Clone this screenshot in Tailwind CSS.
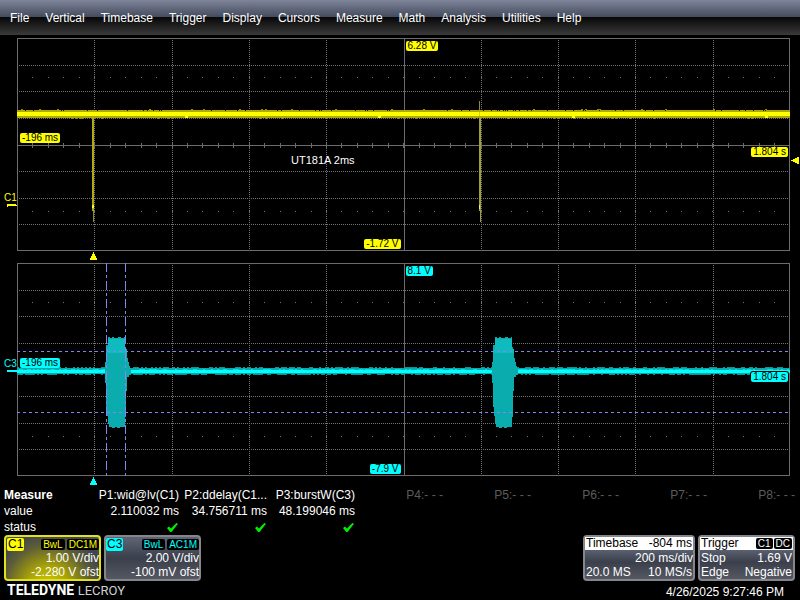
<!DOCTYPE html>
<html lang="en">
<head>
  <meta charset="UTF-8">
  <meta name="viewport" content="width=device-width, initial-scale=1.0">
  <title>Teledyne LeCroy</title>
  <script src="https://cdn.jsdelivr.net/npm/@tailwindcss/browser@4"></script>
</head>
<body class="min-h-screen bg-black text-white text-xs font-['Liberation_Sans',Arial,sans-serif] flex flex-col">

  <!-- Menu bar -->
  <nav class="h-[35px] flex items-center gap-4 pl-[10px] bg-linear-to-b from-[#7f859a] via-[#444c5e] via-48% to-[#3a3a3a] relative">
    <div class="absolute inset-x-0 bottom-0 h-[18px] bg-linear-to-b from-[#080808] to-[#3b3b3b]"></div>
    <button class="relative">File</button>
    <button class="relative">Vertical</button>
    <button class="relative">Timebase</button>
    <button class="relative">Trigger</button>
    <button class="relative">Display</button>
    <button class="relative">Cursors</button>
    <button class="relative">Measure</button>
    <button class="relative">Math</button>
    <button class="relative">Analysis</button>
    <button class="relative">Utilities</button>
    <button class="relative">Help</button>
  </nav>

  <!-- Waveform grids -->
  <main class="flex flex-col gap-3 pt-[3px] pl-[17px] pr-[10px] pb-[11px]">

    <!-- C1 -->
    <section class="relative h-[213px] text-[10px] leading-[10px] text-black">
      <svg class="w-full h-full block" viewBox="0 0 773 213" preserveAspectRatio="none" shape-rendering="crispEdges">
        <g class="grid-lines" data-axis="1"></g>
        <path d="M0 72h773v8H0z" fill="#b0aa00"/>
        <path class="noise" data-top="72" data-bottom="80" data-density="0.05" data-seed="7" fill="#8f8a10"/>
        <path class="gaps" data-y="72" data-seed="21" fill="#1a1a00"/>
        <path d="M75 79h2v94h-2z" fill="#b0aa14"/>
        <path d="M76 173h1v11h-1z" fill="#8f8b2c"/>
        <path d="M75 167h2v3h-2z" fill="#ffff00"/>
        <path d="M462 63h1v9h-1z" fill="#8f8b2c"/>
        <path d="M462 79h2v94h-2z" fill="#a39f35"/>
        <path d="M463 173h1v11h-1z" fill="#a39f35"/>
        <path d="M462 167h1v4h-1z" fill="#f4f060"/>
        <path d="M0 74h773v4H0z" fill="#ffff00"/>
        <path d="M168 78h3v2h-3zM361 78h3v2h-3zM555 78h3v2h-3zM748 78h3v2h-3z" fill="#ffff00"/>
        <path d="M462 74h1v4h-1z" fill="#d8d400"/>
      </svg>
      <span class="absolute top-[3px] left-1/2 ml-[2px] px-[2px] rounded-xs bg-[#ffff00]">6.28 V</span>
      <span class="absolute bottom-[2px] right-1/2 mr-[3px] px-[2px] rounded-xs bg-[#ffff00]">-1.72 V</span>
      <span class="absolute top-[95px] left-[3px] px-[2px] rounded-xs bg-[#ffff00]">-196 ms</span>
      <span class="absolute top-[109px] right-[2px] px-[2px] rounded-xs bg-[#ffff00]">1.804 s</span>
      <span class="absolute top-[117px] left-[274px] text-[11px] text-white">UT181A 2ms</span>
      <!-- ground level, trigger time and trigger level markers -->
      <span class="absolute top-[155px] -left-[13px] text-[#ffff00]">C1</span>
      <svg class="absolute top-[166px] -left-[10px] w-[10px] h-[3px]" viewBox="0 0 10 3" shape-rendering="crispEdges"><path d="M0 0h9v1h1v1H1v1H0z" fill="#ffff00"/></svg>
      <svg class="absolute top-[214px] left-[73px] w-[7px] h-[8px]" viewBox="0 0 7 8" shape-rendering="crispEdges"><path d="M3 0h1v2h1v2h1v2h1v2H0V6h1V4h1V2h1z" fill="#ffff00"/></svg>
      <svg class="absolute top-[119px] -right-[9px] w-[8px] h-[7px]" viewBox="0 0 8 7" shape-rendering="crispEdges"><path d="M8 0v7H6V6H4V5H2V4H0V3h2V2h2V1h2V0z" fill="#ffff00"/></svg>
    </section>

    <!-- C3 -->
    <section class="relative h-[213px] text-[10px] leading-[10px] text-black">
      <svg class="w-full h-full block" viewBox="0 0 773 213" preserveAspectRatio="none" shape-rendering="crispEdges">
        <g class="grid-lines"></g>
        <path d="M0 105h773v6H0z" fill="#0aaaac"/>
        <path class="noise" data-top="105" data-bottom="111" data-density="0.45" data-seed="3" fill="#0a9496"/>
        <path class="noise" data-top="107" data-bottom="109" data-density="0.5" data-seed="11" fill="#05dcdf"/>
        <path d="M0 107h773v3H0z" fill="#00ffff"/>
        <g id="burst">
          <path d="M88 104L89 95V82H91V75L92 73L93 75H95V74H97V75H101V74H104V75H107V74H108V84H109V86H110V95H111V99H112V103H113V105H114V112H112V114H110V128H109V154H108V164H103V165H100V164H98V165H95V164H92V161H91V153H90V144H89V120H88z" fill="#0aacae"/>
          <path d="M91 76H108V86H110V90H90V86H91z" fill="#0ebcbf"/>
        </g>
        <use href="#burst" x="387"/>
        <g stroke="#8484f6" fill="none">
          <path d="M0 88.5H773M0 149.5H773" stroke-dasharray="3 3"/>
          <path d="M89.5 0V213M108.5 0V213" stroke-dasharray="9 3 3 3"/>
        </g>
      </svg>
      <span class="absolute top-[3px] left-1/2 ml-[2px] px-[2px] rounded-xs bg-[#00ffff]">8.1 V</span>
      <span class="absolute bottom-[2px] right-1/2 mr-[3px] px-[2px] rounded-xs bg-[#00ffff]">-7.9 V</span>
      <span class="absolute top-[95px] left-[3px] px-[2px] rounded-xs bg-[#00ffff]">-196 ms</span>
      <span class="absolute top-[109px] right-[2px] px-[2px] rounded-xs bg-[#00ffff] ring-1 ring-black">1.804 s</span>
      <span class="absolute top-[96px] -left-[13px] text-[#00ffff]">C3</span>
      <svg class="absolute top-[107px] -left-[10px] w-[10px] h-[2px]" viewBox="0 0 10 2" shape-rendering="crispEdges"><path d="M0 0h10v2H0z" fill="#00ffff"/></svg>
      <svg class="absolute top-[214px] left-[73px] w-[7px] h-[8px]" viewBox="0 0 7 8" shape-rendering="crispEdges"><path d="M3 0h1v2h1v2h1v2h1v2H0V6h1V4h1V2h1z" fill="#00ffff"/></svg>
    </section>
  </main>

  <!-- Measurements -->
  <div class="pl-1 pr-[5px]">
    <table class="w-full table-fixed leading-4 whitespace-nowrap text-right">
      <colgroup>
        <col class="w-[87px]">
        <col span="8">
      </colgroup>
      <thead>
        <tr>
          <th class="text-left font-bold">Measure</th>
          <th class="font-normal">P1:wid@lv(C1)</th>
          <th class="font-normal">P2:ddelay(C1...</th>
          <th class="font-normal">P3:burstW(C3)</th>
          <th class="font-normal text-[#5c5c5c]">P4:- - -</th>
          <th class="font-normal text-[#5c5c5c]">P5:- - -</th>
          <th class="font-normal text-[#5c5c5c]">P6:- - -</th>
          <th class="font-normal text-[#5c5c5c]">P7:- - -</th>
          <th class="font-normal text-[#5c5c5c]">P8:- - -</th>
        </tr>
      </thead>
      <tbody>
        <tr>
          <th class="text-left font-normal">value</th>
          <td>2.110032 ms</td>
          <td>34.756711 ms</td>
          <td>48.199046 ms</td>
          <td></td><td></td><td></td><td></td><td></td>
        </tr>
        <tr>
          <th class="text-left font-normal">status</th>
          <td><svg class="inline-block w-[11px] h-[9px] mr-px" viewBox="0 0 11 9"><path d="M0 5L2 3.6L4 5.6L9.4 0L11 .8L4.6 9H3.2z" fill="#00f000"/></svg></td>
          <td><svg class="inline-block w-[11px] h-[9px] mr-px" viewBox="0 0 11 9"><path d="M0 5L2 3.6L4 5.6L9.4 0L11 .8L4.6 9H3.2z" fill="#00f000"/></svg></td>
          <td><svg class="inline-block w-[11px] h-[9px] mr-px" viewBox="0 0 11 9"><path d="M0 5L2 3.6L4 5.6L9.4 0L11 .8L4.6 9H3.2z" fill="#00f000"/></svg></td>
          <td></td><td></td><td></td><td></td><td></td>
        </tr>
      </tbody>
    </table>
  </div>

  <!-- Descriptor boxes -->
  <div class="flex gap-[3px] pl-1 pr-[5px] leading-[14px]">
    <button class="w-[97px] h-[46px] rounded border-2 border-[#e2e21c] bg-[radial-gradient(ellipse_at_45%_120%,#d8d000_0%,#a8a208_30%,#5c5c38_60%,#3e4350_80%,#565b6b_100%)] flex flex-col text-right">
      <span class="flex items-center justify-end gap-[2px] h-[15px] w-full">
        <span class="mr-auto ml-px px-px h-[13px] leading-[13px] bg-[#ffff00] text-black rounded-xs">C1</span>
        <span class="px-[2px] h-[11px] text-[10px] leading-[11px] bg-black text-[#ffff00] rounded-xs">BwL</span>
        <span class="px-[2px] h-[11px] text-[10px] leading-[11px] bg-black text-[#ffff00] rounded-xs">DC1M</span>
      </span>
      <span class="w-full">1.00 V/div</span>
      <span class="w-full">-2.280 V ofst</span>
    </button>
    <button class="w-[97px] h-[46px] rounded border-2 border-[#85868c] bg-linear-to-b from-[#5d6272] from-5% via-[#3a3f4b] via-50% to-[#555862] flex flex-col text-right">
      <span class="flex items-center justify-end gap-[2px] h-[15px] w-full">
        <span class="mr-auto px-px h-[13px] leading-[13px] bg-[#00ffff] text-black rounded-xs">C3</span>
        <span class="px-[2px] h-[11px] text-[10px] leading-[11px] bg-black text-[#00ffff] rounded-xs">BwL</span>
        <span class="px-[2px] h-[11px] text-[10px] leading-[11px] bg-black text-[#00ffff] rounded-xs">AC1M</span>
      </span>
      <span class="w-full">2.00 V/div</span>
      <span class="w-full">-100 mV ofst</span>
    </button>
    <button class="ml-auto w-[112px] h-[46px] rounded border-2 border-[#85868c] bg-linear-to-b from-[#5d6272] from-30% via-[#3a3f4b] via-60% to-[#555862] flex flex-col">
      <span class="flex justify-between w-full h-[13px] leading-[13px] bg-white text-black px-px"><span>Timebase</span><span>-804 ms</span></span>
      <span class="w-full text-right mt-px">200 ms/div</span>
      <span class="flex justify-between w-full px-px"><span>20.0 MS</span><span>10 MS/s</span></span>
    </button>
    <button class="w-[97px] h-[46px] rounded border-2 border-[#85868c] bg-linear-to-b from-[#5d6272] from-30% via-[#3a3f4b] via-60% to-[#555862] flex flex-col">
      <span class="flex items-center gap-px w-full h-[13px] leading-[13px] bg-white text-black px-px">
        <span class="mr-auto">Trigger</span>
        <span class="px-[2px] h-[11px] text-[10px] leading-[11px] bg-black text-white rounded-xs">C1</span>
        <span class="px-[2px] h-[11px] text-[10px] leading-[11px] bg-black text-white rounded-xs">DC</span>
      </span>
      <span class="flex justify-between w-full px-px mt-px"><span>Stop</span><span>1.69 V</span></span>
      <span class="flex justify-between w-full px-px"><span>Edge</span><span>Negative</span></span>
    </button>
  </div>

  <!-- Brand and clock -->
  <footer class="flex items-center justify-between h-[19px] pl-[7px] pr-4">
    <p class="font-[Roboto,sans-serif] text-[14px] leading-[19px]"><b>TELEDYNE</b> <span class="text-[13px] text-[#d0d0d0]">LECROY</span></p>
    <time datetime="2025-04-26T21:27:46" class="pt-[2px]">4/26/2025 9:27:46 PM</time>
  </footer>

  <script>
    // 10 x 8 division graticule
    const cols = [77, 155, 232, 309, 464, 541, 618, 696];
    const rows = [27, 53, 80, 133, 160, 186];
    document.querySelectorAll('.grid-lines').forEach((g) => {
      let dotted = '', solid = 'M.5 .5H772.5V212.5H.5zM387.5 0V213', dots = '';
      cols.forEach((x) => { dotted += `M${x + .5} 2V213`; });
      rows.forEach((y) => { dotted += `M2 ${y + .5}H772`; });
      for (let i = 1; i < 50; i++) {
        const x = Math.round(i * 15.45);
        dots += `M${x} 39h1v1h-1zM${x} 173h1v1h-1z`;
        if (g.dataset.axis) solid += `M${x + .5} 105V110`;
      }
      solid += 'M0 107.5H773';
      g.innerHTML = `<path d="${dotted}" stroke="#747474" stroke-dasharray="1 1"/>` +
        `<path d="${solid}" stroke="#6c6c6c" fill="none"/><path d="${dots}" fill="#707070"/>`;
    });

    // repeatable noise along the trace edges
    function random(seed) {
      return () => (seed = (seed * 16807) % 2147483647) / 2147483647;
    }
    document.querySelectorAll('.noise').forEach((p) => {
      const rnd = random(+p.dataset.seed * 9973);
      const top = +p.dataset.top, bottom = +p.dataset.bottom, density = +p.dataset.density;
      let d = '';
      for (let x = 0; x < 772; x += 2) {
        if (rnd() < density) d += `M${x} ${top - 1}h2v1h-2z`;
        if (rnd() < density * 1.3) d += `M${x} ${bottom}h2v1h-2z`;
      }
      p.setAttribute('d', d);
    });
    document.querySelectorAll('.gaps').forEach((p) => {
      const rnd = random(+p.dataset.seed * 9973);
      let d = '';
      for (let x = 0; x < 772; x += 2) {
        if (rnd() < .15) d += `M${x} ${p.dataset.y}h1v1h-1z`;
      }
      p.setAttribute('d', d);
    });
  </script>
</body>
</html>
